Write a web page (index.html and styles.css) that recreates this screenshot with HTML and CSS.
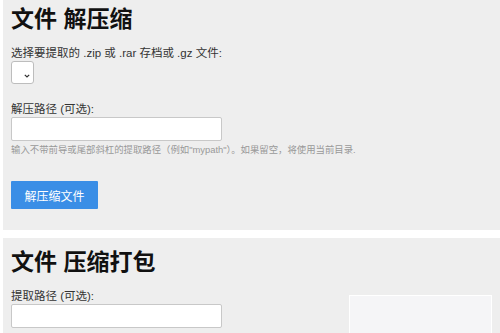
FILE: index.html
```html
<!DOCTYPE html>
<html lang="zh-CN">
<head>
    <meta charset="UTF-8">
    <meta name="viewport" content="width=device-width, initial-scale=1.0">
    <title>文件工具</title>
    <link rel="stylesheet" href="styles.css">
</head>
<body>
    <div class="panel first">
        <h1>文件 解压缩</h1>
        <label class="field-label">选择要提取的 .zip 或 .rar 存档或 .gz 文件:</label>
        <select class="file-select"></select>

        <label class="field-label spaced">解压路径 (可选):</label>
        <input type="text" class="text-input">
        <p class="hint">输入不带前导或尾部斜杠的提取路径（例如"mypath"）。如果留空，将使用当前目录.</p>

        <button class="btn">解压缩文件</button>
    </div>

    <div class="panel">
        <h1>文件 压缩打包</h1>
        <div class="row">
            <div class="col">
                <label class="field-label">提取路径 (可选):</label>
                <input type="text" class="text-input">
            </div>
            <div class="preview"></div>
        </div>
    </div>
</body>
</html>
```

FILE: styles.css
```css
* {
    margin: 0;
    padding: 0;
    box-sizing: border-box;
}
body {
    font-family: "Liberation Sans", "Noto Sans CJK SC", sans-serif;
    background: #fff;
    color: #333;
}
.panel {
    background: #eeeeee;
    margin: 0 0 8px 3px;
    padding: 10px 8px 21px;
}
.panel.first {
    padding-top: 5px;
}
h1 {
    font-size: 23px;
    line-height: 29px;
    font-weight: bold;
    color: #111;
    margin-bottom: 11px;
}
.field-label {
    display: block;
    font-size: 11.5px;
    line-height: 16px;
    color: #333;
}
.field-label.spaced {
    margin-top: 17px;
}
.file-select {
    display: block;
    width: 23px;
    height: 23px;
    border: 1px solid #bdbdbd;
    border-radius: 3px;
    background: #fff url("data:image/svg+xml,%3Csvg xmlns='http://www.w3.org/2000/svg' width='6' height='4' viewBox='0 0 6 4'%3E%3Cpath d='M0.8 0.8 L3 3 L5.2 0.8' fill='none' stroke='%23333' stroke-width='1.2'/%3E%3C/svg%3E") no-repeat 12px 12px;
    -webkit-appearance: none;
    appearance: none;
}
.text-input {
    display: block;
    width: 211px;
    height: 24px;
    border: 1px solid #c8c8c8;
    border-radius: 2px;
    background: #fff;
}
.hint {
    font-size: 9.4px;
    line-height: 14px;
    color: #999;
    margin-top: 2px;
}
.btn {
    margin-top: 24px;
    width: 87px;
    height: 28px;
    border: none;
    border-radius: 1px;
    background: #3a8ee6;
    color: #fff;
    font-family: "Liberation Sans", "Noto Sans CJK SC", sans-serif;
    font-size: 12px;
}
.row {
    display: flex;
    align-items: flex-start;
}
.preview {
    margin-left: auto;
    margin-top: 7px;
    width: 143px;
    height: 60px;
    background: #f5f5f7;
    border: 1px solid #fff;
}
```
